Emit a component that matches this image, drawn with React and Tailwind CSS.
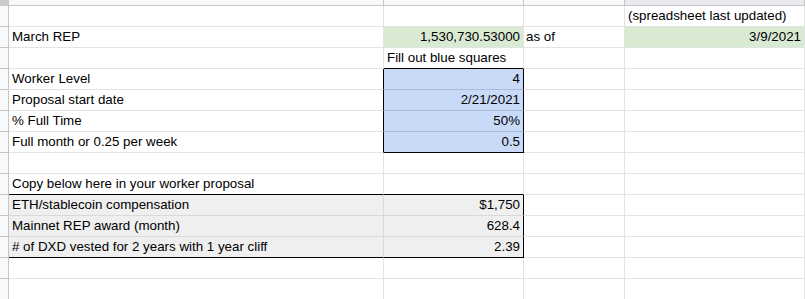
import React from 'react';

// column widths include the 1px right grid line
const cols = 'grid-cols-[9px_375px_140px_101px_180px]';

const GRID = 'border-[#e2e3e3]';

function Cell({ children, className = '', right = false, pad = 'px-[3px]' }) {
  return (
    <div
      className={`h-[21px] border-r border-b ${pad} leading-[20px] whitespace-nowrap overflow-visible ${
        right ? 'text-right' : ''
      } ${className}`}
    >
      {children}
    </div>
  );
}

function Gutter() {
  return <div className="h-[21px] border-r border-b border-[#c4c7c5] bg-[#f8f9fa]" />;
}

export default function App() {
  return (
    <div
      className="w-[805px] h-[299px] overflow-hidden bg-white text-[13.33px] text-black"
      style={{ fontFamily: '"Liberation Sans", Arial, sans-serif' }}
    >
      <div className={`grid ${cols}`}>
        {/* column header strip */}
        <div className="h-[6px] bg-[#c9cbce] border-r border-b border-[#c4c7c5]" />
        <div className="h-[6px] bg-[#f8f9fa] border-r border-b border-[#c4c7c5]" />
        <div className="h-[6px] bg-[#f8f9fa] border-r border-b border-[#c4c7c5]" />
        <div className="h-[6px] bg-[#f8f9fa] border-r border-b border-[#c4c7c5]" />
        <div className="h-[6px] bg-[#e8eaed] border-r border-b border-[#c4c7c5]" />

        {/* row 1 */}
        <Gutter />
        <Cell className={GRID} />
        <Cell className={GRID} />
        <Cell className={GRID} />
        <Cell className={GRID}>(spreadsheet last updated)</Cell>

        {/* row 2 */}
        <Gutter />
        <Cell className={GRID}>March REP</Cell>
        <Cell className={`${GRID} bg-[#d9ead3]`} right>1,530,730.53000</Cell>
        <Cell className={GRID} pad="pl-[2px]">as of</Cell>
        <Cell className={`${GRID} bg-[#d9ead3]`} right>3/9/2021</Cell>

        {/* row 3 */}
        <Gutter />
        <Cell className={GRID} />
        <Cell className="border-r-[#e2e3e3] border-b-black">Fill out blue squares</Cell>
        <Cell className={GRID} />
        <Cell className={GRID} />

        {/* blue input block */}
        {[
          ['Worker Level', '4', false],
          ['Proposal start date', '2/21/2021', false],
          ['% Full Time', '50%', false],
          ['Full month or 0.25 per week', '0.5', true],
        ].map(([label, value, last]) => (
          <React.Fragment key={label}>
            <Gutter />
            <Cell className="border-r-black border-b-[#e2e3e3]">{label}</Cell>
            <Cell
              className={`bg-[#c9daf8] border-r-black ${last ? 'border-b-black' : 'border-b-[#adbdd9]'}`}
              right
            >
              {value}
            </Cell>
            <Cell className={GRID} />
            <Cell className={GRID} />
          </React.Fragment>
        ))}

        {/* empty row */}
        <Gutter />
        <Cell className={GRID} />
        <Cell className={GRID} />
        <Cell className={GRID} />
        <Cell className={GRID} />

        {/* copy below */}
        <Gutter />
        <Cell className="border-r-[#e2e3e3] border-b-black">Copy below here in your worker proposal</Cell>
        <Cell className="border-r-[#e2e3e3] border-b-black" />
        <Cell className={GRID} />
        <Cell className={GRID} />

        {/* grey output block */}
        {[
          ['ETH/stablecoin compensation', '$1,750', false],
          ['Mainnet REP award (month)', '628.4', false],
          ['# of DXD vested for 2 years with 1 year cliff', '2.39', true],
        ].map(([label, value, last]) => (
          <React.Fragment key={label}>
            <Gutter />
            <Cell className={`bg-[#efefef] border-r-[#d9d9d9] ${last ? 'border-b-black' : 'border-b-[#d9d9d9]'}`}>
              {label}
            </Cell>
            <Cell
              className={`bg-[#efefef] border-r-black ${last ? 'border-b-black' : 'border-b-[#d9d9d9]'}`}
              right
            >
              {value}
            </Cell>
            <Cell className={GRID} />
            <Cell className={GRID} />
          </React.Fragment>
        ))}

        {[0, 1].map((i) => (
          <React.Fragment key={i}>
            <Gutter />
            <Cell className={GRID} />
            <Cell className={GRID} />
            <Cell className={GRID} />
            <Cell className={GRID} />
          </React.Fragment>
        ))}
      </div>
    </div>
  );
}
